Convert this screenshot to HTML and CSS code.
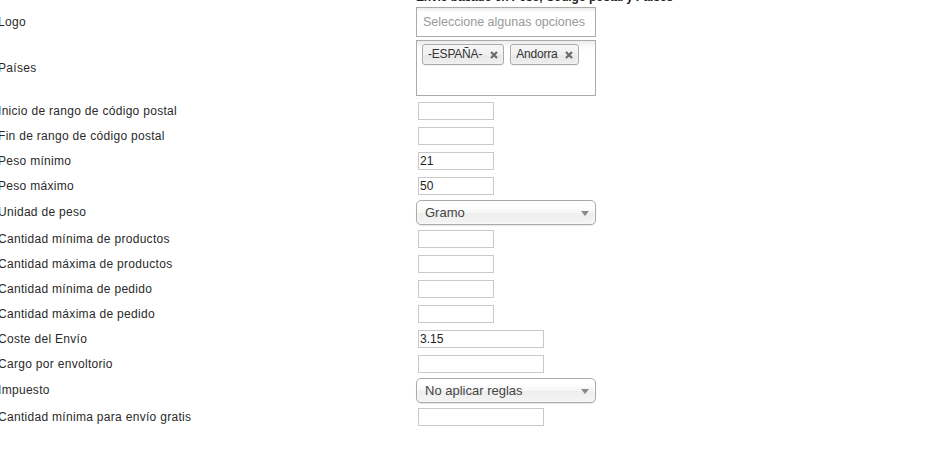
FILE: index.html
```html
<!DOCTYPE html>
<html lang="es">
  <head>
    <meta charset="UTF-8" />
    <title>Envío basado en Peso, Código postal y Países</title>
    <link rel="stylesheet" href="styles.css">
  </head>
  <body>
    <div class="page">
      <div class="row row-title">
        <span></span>
        <h3 class="title">Envío basado en Peso, Código postal y Países</h3>
      </div>

      <div class="row row-logo">
        <label>Logo</label>
        <div class="chosen chosen-single">
          <span class="placeholder">Seleccione algunas opciones</span>
        </div>
      </div>

      <div class="row row-countries">
        <label>Países</label>
        <div class="chosen chosen-multi">
          <span class="tag">-ESPAÑA- <svg class="x" viewBox="0 0 8 8"><path d="M1 1L7 7M7 1L1 7"/></svg></span>
          <span class="tag">Andorra <svg class="x" viewBox="0 0 8 8"><path d="M1 1L7 7M7 1L1 7"/></svg></span>
        </div>
      </div>

      <div class="row"><label>Inicio de rango de código postal</label><input type="text" class="txt"></div>
      <div class="row"><label>Fin de rango de código postal</label><input type="text" class="txt"></div>
      <div class="row"><label>Peso mínimo</label><input type="text" class="txt" value="21"></div>
      <div class="row"><label>Peso máximo</label><input type="text" class="txt" value="50"></div>

      <div class="row row-select">
        <label>Unidad de peso</label>
        <div class="select"><span>Gramo</span><i class="arrow"></i></div>
      </div>

      <div class="row"><label>Cantidad mínima de productos</label><input type="text" class="txt"></div>
      <div class="row"><label>Cantidad máxima de productos</label><input type="text" class="txt"></div>
      <div class="row"><label>Cantidad mínima de pedido</label><input type="text" class="txt"></div>
      <div class="row"><label>Cantidad máxima de pedido</label><input type="text" class="txt"></div>
      <div class="row"><label>Coste del Envío</label><input type="text" class="txt wide" value="3.15"></div>
      <div class="row"><label>Cargo por envoltorio</label><input type="text" class="txt wide"></div>

      <div class="row row-select">
        <label>Impuesto</label>
        <div class="select"><span>No aplicar reglas</span><i class="arrow"></i></div>
      </div>

      <div class="row"><label>Cantidad mínima para envío gratis</label><input type="text" class="txt wide"></div>
    </div>
  </body>
</html>
```

FILE: styles.css
```css
body {
  margin: 0;
  background: #fff;
  color: #333;
  font-family: "Liberation Sans", Arial, sans-serif;
  font-size: 12px;
}
.page {
  margin: -10px 0 0 -2px;
}
.row {
  display: grid;
  grid-template-columns: 418px 180px;
  align-items: center;
  height: 25px;
}
.row label {
  color: #2a2a2a;
  letter-spacing: 0.3px;
  white-space: nowrap;
}
.row-title {
  height: 15px;
  margin-bottom: 1px;
}
.title {
  margin: 0;
  font-size: 12px;
  line-height: 15px;
  letter-spacing: -0.2px;
  color: #222;
  white-space: nowrap;
}
.row-logo {
  height: 32px;
}
.row-countries {
  height: 60px;
}
.row-select {
  height: 28px;
}

/* chosen boxes */
.chosen {
  box-sizing: border-box;
  width: 180px;
  border: 1px solid #aaa;
  background: linear-gradient(#eee 1%, #fff 15%);
}
.chosen-single {
  height: 30px;
  padding: 7px 0 0 6px;
}
.placeholder {
  color: #999;
  font-size: 12.5px;
}
.chosen-multi {
  height: 56px;
  padding: 3px 0 0 5px;
  display: flex;
  align-items: flex-start;
  gap: 6px;
}
.tag {
  display: inline-flex;
  align-items: center;
  gap: 8px;
  height: 21px;
  box-sizing: border-box;
  padding: 0 5px 0 5px;
  border: 1px solid #aaa;
  border-radius: 3px;
  background: linear-gradient(#f4f4f4 20%, #f0f0f0 50%, #e8e8e8 52%, #eee);
  box-shadow: 0 0 2px #fff inset, 0 1px 0 rgba(0, 0, 0, 0.05);
  color: #333;
  font-size: 12px;
  letter-spacing: -0.2px;
  line-height: 13px;
}
.x {
  width: 8px;
  height: 8px;
  stroke: #6a6a6a;
  stroke-width: 2.2;
  fill: none;
}

/* plain inputs */
.txt {
  box-sizing: border-box;
  width: 76px;
  height: 18px;
  margin: 0 0 0 2px;
  padding: 0 1px;
  border: 1px solid #c8c8c8;
  font-family: "Liberation Sans", Arial, sans-serif;
  font-size: 12px;
  color: #222;
  outline: none;
}
.txt.wide {
  width: 126px;
}

/* dropdowns */
.select {
  position: relative;
  box-sizing: border-box;
  width: 180px;
  height: 25px;
  padding-left: 8px;
  border: 1px solid #aaa;
  border-radius: 5px;
  background: linear-gradient(#fff 20%, #f6f6f6 50%, #eee 52%, #f4f4f4 100%);
  box-shadow: 0 0 3px #fff inset, 0 1px 1px rgba(0, 0, 0, 0.1);
  display: flex;
  align-items: center;
  color: #444;
  font-size: 13px;
}
.arrow {
  position: absolute;
  right: 6px;
  top: 10px;
  border-left: 4px solid transparent;
  border-right: 4px solid transparent;
  border-top: 5px solid #888;
}
```
